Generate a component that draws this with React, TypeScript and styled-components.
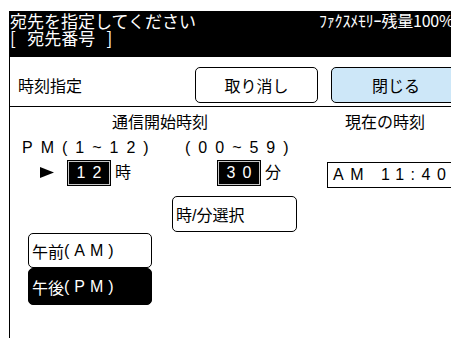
import React from 'react';
import styled, { createGlobalStyle } from 'styled-components';

const GlobalStyle = createGlobalStyle`
  html, body {
    margin: 0;
    padding: 0;
    background: #ffffff;
  }
  body {
    font-family: "Liberation Sans", "Noto Sans CJK JP", sans-serif;
    color: #000000;
  }
`;

const Page = styled.div`
  width: 451px;
  height: 338px;
  overflow: hidden;
  box-sizing: border-box;
  padding: 11px 0 0 9px;
  display: flex;
  flex-direction: column;
`;

const Header = styled.div`
  height: 46px;
  flex: none;
  background: #000000;
  color: #ffffff;
  display: flex;
  font-family: "Noto Sans CJK JP", sans-serif;
  font-size: 17px;
  line-height: 17px;
  padding-top: 1px;
  box-sizing: border-box;
`;

const HeaderLeft = styled.div`
  width: 309px;
  flex: none;
  padding-left: 1px;
  white-space: pre;
`;

const HeaderRight = styled.div`
  white-space: nowrap;
  font-size: 16px;
  letter-spacing: -0.2px;
`;

const Body = styled.div`
  flex: 1;
  border-left: 1px solid #000000;
  display: flex;
  flex-direction: column;
`;

const TitleBar = styled.div`
  height: 50px;
  flex: none;
  border-bottom: 1px solid #000000;
  display: flex;
  align-items: center;
  padding-top: 7px;
  box-sizing: border-box;
`;

const Title = styled.div`
  width: 185px;
  flex: none;
  padding-left: 8px;
  box-sizing: border-box;
  font-size: 16px;
`;

const BarButton = styled.div<{ $w: number; $active?: boolean }>`
  width: ${(p) => p.$w}px;
  height: 36px;
  flex: none;
  box-sizing: border-box;
  border: 1px solid #000000;
  border-radius: 5px;
  background: ${(p) => (p.$active ? '#cde7f8' : '#ffffff')};
  display: flex;
  align-items: center;
  justify-content: center;
  font-size: 16px;
  margin-right: 13px;
`;

const Content = styled.div`
  display: flex;
  flex-direction: column;
  font-size: 16px;
`;

const HeadRow = styled.div`
  display: flex;
  margin-top: 6px;
  line-height: 20px;
`;

const HeadCell = styled.div<{ $w?: number; $pl: number }>`
  width: ${(p) => (p.$w ? `${p.$w}px` : 'auto')};
  flex: none;
  box-sizing: border-box;
  padding-left: ${(p) => p.$pl}px;
`;

const RangeRow = styled.div`
  display: flex;
  margin-top: 5px;
  line-height: 20px;
  padding-left: 12px;
  letter-spacing: 8px;
`;

const Range = styled.span<{ $w?: number }>`
  width: ${(p) => (p.$w ? `${p.$w}px` : 'auto')};
  flex: none;
  white-space: nowrap;
`;

const ValueRow = styled.div`
  display: flex;
  align-items: flex-start;
  margin-top: 2px;
  height: 28px;
`;

const Arrow = styled.svg`
  margin: 7px 0 0 30px;
  flex: none;
`;

const ValueBox = styled.div<{ $ml: number }>`
  width: 44px;
  height: 26px;
  flex: none;
  box-sizing: border-box;
  margin-left: ${(p) => p.$ml}px;
  background: #000000;
  border: 1px solid #000000;
  box-shadow: inset 0 0 0 1px #c8c8c8;
  color: #ffffff;
  display: flex;
  align-items: center;
  justify-content: center;
  letter-spacing: 7px;
  padding-left: 7px;
`;

const Unit = styled.span`
  margin-left: 4px;
  line-height: 26px;
  flex: none;
`;

const TimeBox = styled.div<{ $ml: number }>`
  width: 140px;
  height: 26px;
  flex: none;
  box-sizing: border-box;
  margin: 2px 0 0 ${(p) => p.$ml}px;
  border: 1px solid #000000;
  display: flex;
  align-items: center;
  padding-left: 5px;
  letter-spacing: 6.5px;
  white-space: pre;
`;

const SelectButton = styled.div`
  width: 125px;
  height: 36px;
  box-sizing: border-box;
  margin: 8px 0 0 162px;
  border: 1px solid #000000;
  border-radius: 5px;
  display: flex;
  align-items: center;
  padding-left: 3px;
`;

const ChoiceStack = styled.div`
  display: flex;
  flex-direction: column;
  margin: 1px 0 0 18px;
  width: 124px;
`;

const Choice = styled.div<{ $selected?: boolean; $h: number }>`
  height: ${(p) => p.$h}px;
  box-sizing: border-box;
  border: 1px solid #000000;
  border-radius: 5px;
  background: ${(p) => (p.$selected ? '#000000' : '#ffffff')};
  color: ${(p) => (p.$selected ? '#ffffff' : '#000000')};
  display: flex;
  align-items: center;
  padding-left: 3px;
  white-space: nowrap;
`;

const Latin = styled.span`
  letter-spacing: 5px;
`;

export default function App() {
  return (
    <>
      <GlobalStyle />
      <Page>
        <Header>
          <HeaderLeft>
            {'宛先を指定してください\n[   宛先番号   ]'}
          </HeaderLeft>
          <HeaderRight>ﾌｧｸｽﾒﾓﾘｰ残量100%</HeaderRight>
        </Header>
        <Body>
          <TitleBar>
            <Title>時刻指定</Title>
            <BarButton $w={123}>取り消し</BarButton>
            <BarButton $w={130} $active>
              閉じる
            </BarButton>
          </TitleBar>
          <Content>
            <HeadRow>
              <HeadCell $w={312} $pl={102}>
                通信開始時刻
              </HeadCell>
              <HeadCell $pl={23}>現在の時刻</HeadCell>
            </HeadRow>
            <RangeRow>
              <Range $w={163}>PM(1~12)</Range>
              <Range>(00~59)</Range>
            </RangeRow>
            <ValueRow>
              <Arrow width="14" height="11" viewBox="0 0 14 11">
                <polygon points="0,0 14,5.5 0,11" fill="#000000" />
              </Arrow>
              <ValueBox $ml={13}>12</ValueBox>
              <Unit>時</Unit>
              <ValueBox $ml={86}>30</ValueBox>
              <Unit>分</Unit>
              <TimeBox $ml={46}>{'AM 11:40'}</TimeBox>
            </ValueRow>
            <SelectButton>時/分選択</SelectButton>
            <ChoiceStack>
              <Choice $h={35}>
                午前<Latin>(AM)</Latin>
              </Choice>
              <Choice $h={37} $selected>
                午後<Latin>(PM)</Latin>
              </Choice>
            </ChoiceStack>
          </Content>
        </Body>
      </Page>
    </>
  );
}
